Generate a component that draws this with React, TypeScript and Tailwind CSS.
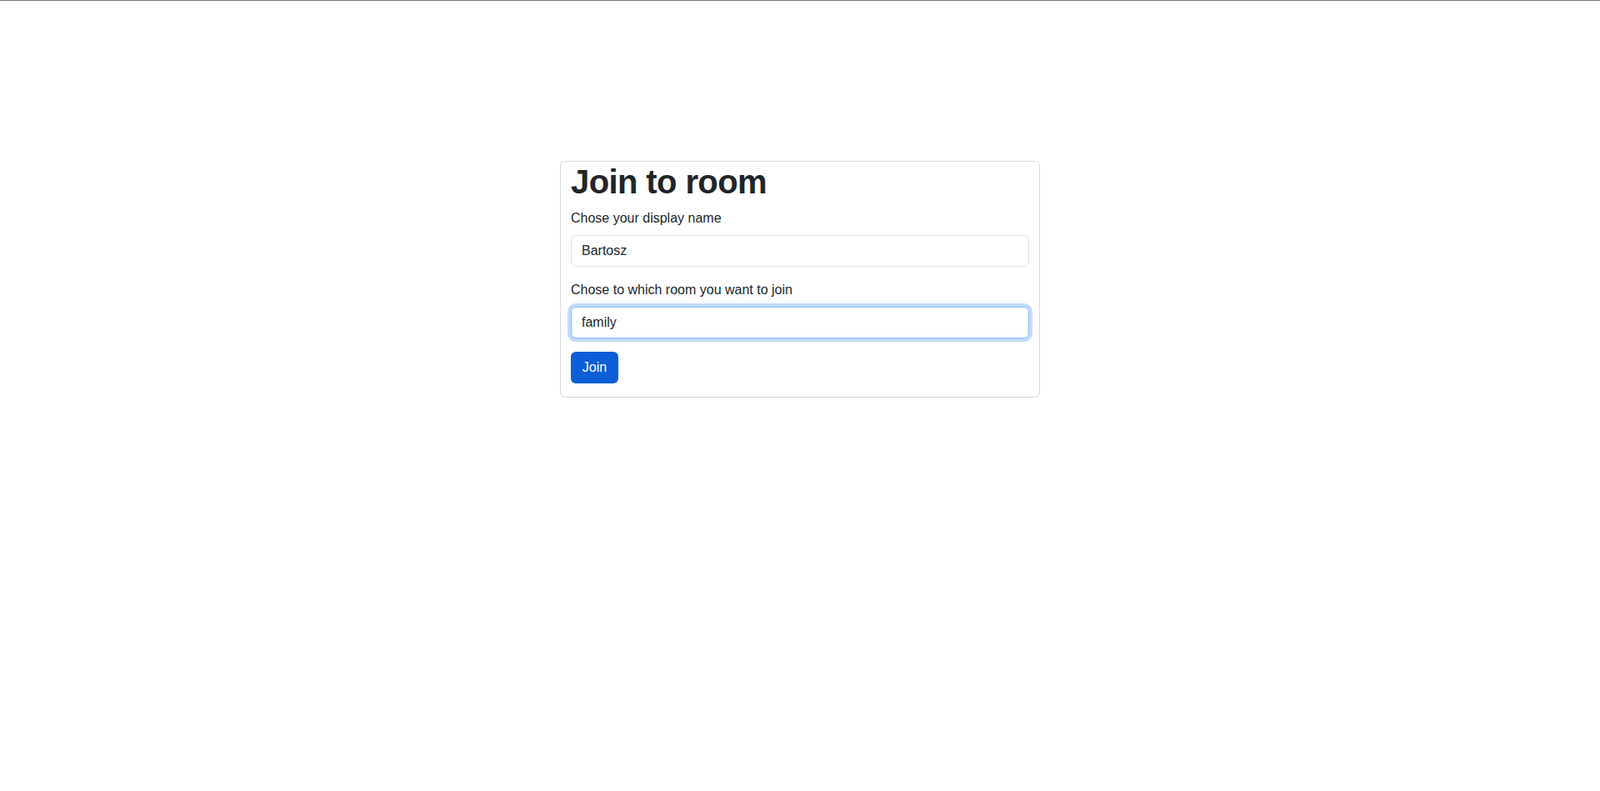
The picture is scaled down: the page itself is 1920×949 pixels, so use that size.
import React from "react";

export default function App() {
  return (
    <div
      className="min-h-[949px] w-full bg-white border-t border-[#6c7a80] text-[#212529]"
      style={{ fontFamily: '"Liberation Sans", Arial, sans-serif' }}
    >
      <div className="flex justify-center pt-[192px]">
        <div className="w-[576px] rounded-[6px] border border-[#d6d8db] px-[12px] pb-[16px]">
          <h1 className="m-0 mb-[8px] text-[40px] font-bold leading-[48px] tracking-[-0.6px] text-[#212529]">
            Join to room
          </h1>
          <label className="mb-[8px] block text-[16px] leading-[24px]">
            Chose your display name
          </label>
          <input
            defaultValue="Bartosz"
            className="mb-[16px] block h-[38px] w-full rounded-[6px] border border-[#dee2e6] bg-white px-[12px] text-[16px] text-[#212529] outline-none"
          />
          <label className="mb-[8px] block text-[16px] leading-[24px]">
            Chose to which room you want to join
          </label>
          <input
            defaultValue="family"
            className="mb-[16px] block h-[38px] w-full rounded-[6px] border border-[#86b7fe] bg-white px-[12px] text-[16px] text-[#212529] outline-none shadow-[0_0_0_4px_rgba(13,110,253,0.25)]"
          />
          <button className="block h-[38px] w-[57px] rounded-[6px] bg-[#0b5ed7] text-center text-[16px] text-white">
            Join
          </button>
        </div>
      </div>
    </div>
  );
}
